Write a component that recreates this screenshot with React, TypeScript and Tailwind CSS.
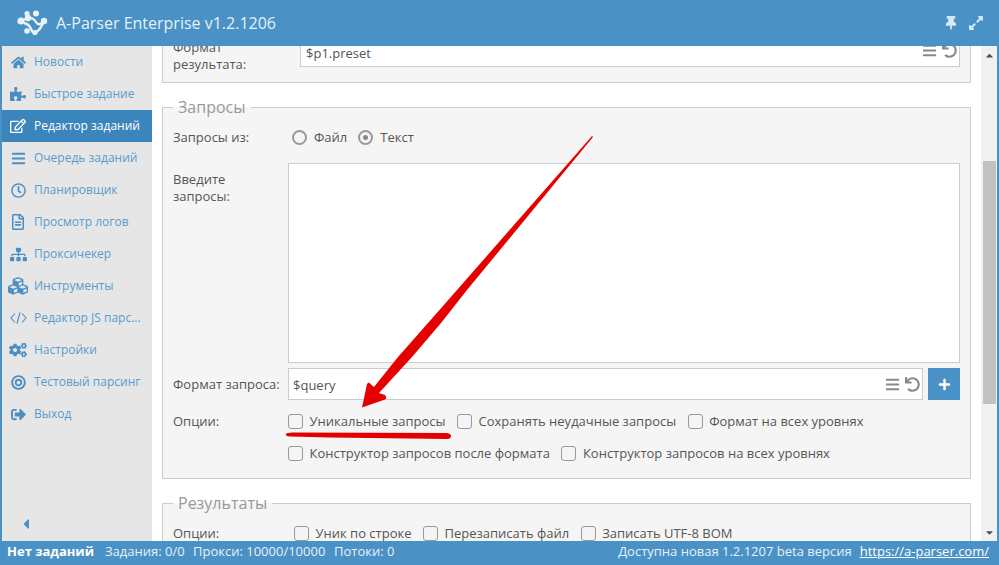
import React from "react";
import { FaHome, FaPuzzlePiece, FaRegEdit, FaBars, FaCogs, FaBullseye, FaSitemap, FaCubes, FaRegFileAlt, FaThumbtack, FaExpandAlt, FaUndo, FaPlus, FaCaretLeft, FaCaretUp, FaCaretDown, FaSignOutAlt, FaRegClock } from "react-icons/fa";

function CodeIcon() {
  return (
    <svg width="17" height="12" viewBox="0 0 17 12" fill="none" stroke="currentColor" strokeWidth="1.1">
      <path d="M5 1.5 1 6l4 4.5M12 1.5 16 6l-4 4.5M10 .5 7 11.5" />
    </svg>
  );
}

const nav: { label: string; icon: React.ReactNode; active?: boolean }[] = [
  { label: "Новости", icon: <FaHome size={15} /> },
  { label: "Быстрое задание", icon: <FaPuzzlePiece size={16} /> },
  { label: "Редактор заданий", icon: <FaRegEdit size={16} />, active: true },
  { label: "Очередь заданий", icon: <FaBars size={15} /> },
  { label: "Планировщик", icon: <FaRegClock size={15} /> },
  { label: "Просмотр логов", icon: <FaRegFileAlt size={16} /> },
  { label: "Проксичекер", icon: <FaSitemap size={17} /> },
  { label: "Инструменты", icon: <FaCubes size={20} /> },
  { label: "Редактор JS парс...", icon: <CodeIcon /> },
  { label: "Настройки", icon: <FaCogs size={18} /> },
  { label: "Тестовый парсинг", icon: <FaBullseye size={15} /> },
  { label: "Выход", icon: <FaSignOutAlt size={15} /> },
];

function Logo() {
  return (
    <svg width="34" height="26" viewBox="0 0 34 26" className="text-[#e9f2f8]" fill="currentColor">
      <circle cx="6" cy="11" r="3.6" />
      <circle cx="12" cy="3.5" r="2.6" />
      <circle cx="21" cy="3.5" r="3" />
      <circle cx="13" cy="8" r="3.2" />
      <circle cx="29" cy="11" r="3.2" />
      <circle cx="12" cy="21" r="2.8" />
      <circle cx="20" cy="22.5" r="2.6" />
      <path d="M6 11 13 8Q18 7 21 12T29 11M9 13Q14 14 16 19T20 22.5Q25 21 29 11" stroke="currentColor" strokeWidth="2.4" fill="none" />
    </svg>
  );
}

function Check({ label }: { label: string }) {
  return (
    <label className="flex items-center gap-[6.5px]">
      <span className="w-[15px] h-[15px] rounded-[3px] border border-[#999] bg-[#f4f4f4]" />
      <span>{label}</span>
    </label>
  );
}

function Radio({ label, on }: { label: string; on?: boolean }) {
  return (
    <label className="flex items-center gap-[7px]">
      <span className="w-[15px] h-[15px] rounded-full border-2 border-[#999] flex items-center justify-center">
        {on && <span className="w-[5px] h-[5px] rounded-full bg-[#888]" />}
      </span>
      <span>{label}</span>
    </label>
  );
}

function InputIcons() {
  return (
    <span className="flex items-center gap-[5px] text-[#888]">
      <FaBars size={15} />
      <FaUndo size={15} />
    </span>
  );
}

export default function App() {
  return (
    <div className="relative w-[999px] h-[565px] overflow-hidden flex flex-col bg-white text-[13px] text-[#555] font-['Open_Sans',sans-serif]">
      <header className="h-[46px] shrink-0 bg-[#4a92c6] flex items-center pl-[15px] pr-[15px] text-[#e6f0f7]">
        <Logo />
        <span className="ml-[7px] text-[16px] leading-none">A-Parser Enterprise v1.2.1206</span>
        <span className="ml-auto flex items-center gap-[10px] text-[#d5e8f5]">
          <FaThumbtack size={14} />
          <FaExpandAlt size={16} />
        </span>
      </header>

      <div className="flex-1 min-h-0 flex border-l-2 border-r-[2px] border-[#4a92c6]">
        <nav className="w-[150px] shrink-0 bg-[#e6e6e6] flex flex-col text-[#5a9bcd] text-[12px]">
          {nav.map((n) => (
            <div key={n.label} className={`h-[32px] flex items-center pl-[6px] shrink-0 ${n.active ? "bg-[#3a85bb] text-white" : ""}`}>
              <span className={`w-[20px] flex justify-center shrink-0 ${n.active ? "text-white" : "text-[#4a8ec2]"}`}>{n.icon}</span>
              <span className="ml-[6px] whitespace-nowrap">{n.label}</span>
            </div>
          ))}
          <div className="mt-auto h-[25px] pl-[16px] text-[#4a92c6]">
            <FaCaretLeft size={16} />
          </div>
        </nav>

        <main className="flex-1 min-w-0 overflow-hidden pl-[10px] pr-[10px]">
          <div className="-mt-[12px]">
            <section className="h-[49px] bg-[#f5f5f5] border border-[#ccc] border-t-0 flex pl-[10px] pr-[10px]">
              <div className="w-[127px] leading-[17px] pt-[5px] text-[#555]">Формат<br />результата:</div>
              <div className="h-[33px] flex-1 bg-white border border-[#ccc] flex items-center justify-between pl-[5px] pr-[2px]">
                <span className="pt-[7px]">$p1.preset</span>
                <InputIcons />
              </div>
            </section>

            <section className="mt-[24px] relative h-[372px] bg-[#f5f5f5] border border-[#ccc] pl-[10px] pr-[10px]">
              <span className="absolute -top-[12px] left-[10px] px-[5px] bg-[linear-gradient(#fff_50%,#f5f5f5_50%)] text-[16px] leading-[22px] text-[#999]">Запросы</span>
              <div className="h-[60px] pt-[15px] flex items-start">
                <span className="w-[119px] leading-[28px]">Запросы из:</span>
                <div className="flex gap-[11px] pt-[5px]">
                  <Radio label="Файл" />
                  <Radio label="Текст" on />
                </div>
              </div>
              <div className="-mt-[5px] flex">
                <span className="w-[115px] pt-[8px] leading-[17px]">Введите<br />запросы:</span>
                <div className="flex-1 h-[200px] bg-white border border-[#ccc]" />
              </div>
              <div className="mt-[5px] flex items-center">
                <span className="w-[115px] pt-[1px]">Формат запроса:</span>
                <div className="flex-1 h-[32px] bg-white border border-[#ccc] flex items-center justify-between pl-[4px] pr-[2px]">
                  <span className="pt-[3px]">$query</span>
                  <InputIcons />
                </div>
                <button className="ml-[5px] w-[32px] h-[32px] bg-[#4a92c6] text-white flex items-center justify-center">
                  <FaPlus size={13} />
                </button>
              </div>
              <div className="mt-[11px] flex">
                <span className="w-[115px] leading-[20px]">Опции:</span>
                <div className="flex flex-col gap-[12px] leading-[20px]">
                  <div className="flex gap-[11.5px]">
                    <Check label="Уникальные запросы" />
                    <Check label="Сохранять неудачные запросы" />
                    <Check label="Формат на всех уровнях" />
                  </div>
                  <div className="flex gap-[11.5px]">
                    <Check label="Конструктор запросов после формата" />
                    <Check label="Конструктор запросов на всех уровнях" />
                  </div>
                </div>
              </div>
            </section>

            <section className="mt-[24px] relative h-[60px] bg-[#f5f5f5] border border-[#ccc] pl-[10px]">
              <span className="absolute -top-[12px] left-[10px] px-[5px] bg-[linear-gradient(#fff_50%,#f5f5f5_50%)] text-[16px] leading-[22px] text-[#999]">Результаты</span>
              <div className="pt-[19px] flex leading-[20px]">
                <span className="w-[121px]">Опции:</span>
                <div className="flex gap-[11.5px]">
                  <Check label="Уник по строке" />
                  <Check label="Перезаписать файл" />
                  <Check label="Записать UTF-8 BOM" />
                </div>
              </div>
            </section>
          </div>
        </main>

        <aside className="w-[16px] shrink-0 bg-[#f1f1f1] flex flex-col items-center text-[#505050]">
          <span className="h-[18px] flex items-center"><FaCaretUp size={11} /></span>
          <div className="h-[97px]" />
          <div className="w-[13px] h-[243px] bg-[#c1c1c1]" />
          <span className="mt-auto h-[18px] flex items-center"><FaCaretDown size={11} /></span>
        </aside>
      </div>

      <footer className="h-[24px] shrink-0 bg-[#4a92c6] flex items-center pl-[7px] pr-[10px] pb-[2px] text-[#e6f0f7] whitespace-nowrap">
        <b className="font-bold text-white w-[98px]">Нет заданий</b>
        <span className="w-[88px]">Задания: 0/0</span>
        <span className="w-[141px]">Прокси: 10000/10000</span>
        <span>Потоки: 0</span>
        <span className="ml-auto">Доступна новая 1.2.1207 beta версия</span>
        <a className="ml-[8px] underline text-white">https://a-parser.com/</a>
      </footer>

      <svg className="absolute inset-0 pointer-events-none" width="999" height="565" viewBox="0 0 999 565">
        <defs>
          <linearGradient id="r" x1="0" y1="0" x2="1" y2="1">
            <stop offset="0" stopColor="#ee0000" />
            <stop offset="1" stopColor="#dd0000" />
          </linearGradient>
        </defs>
        <path d="M592 136 L593 137 L467 290 L441 323 L412 357 L379 393 L385 395 Q387.5 398 385 399.5 L362 407.5 L367 384 Q369 381.5 370.5 384 L374 387 L398 357 L428 323 L457 290 Z" fill="url(#r)" />
        <path d="M286 434 Q287 432.5 292 432.5 L447 433 Q451 434 451 436 Q451 439 447 439 L330 437.5 L290 436.5 Q285 436 286 434 Z" fill="#e30000" />
      </svg>
    </div>
  );
}
